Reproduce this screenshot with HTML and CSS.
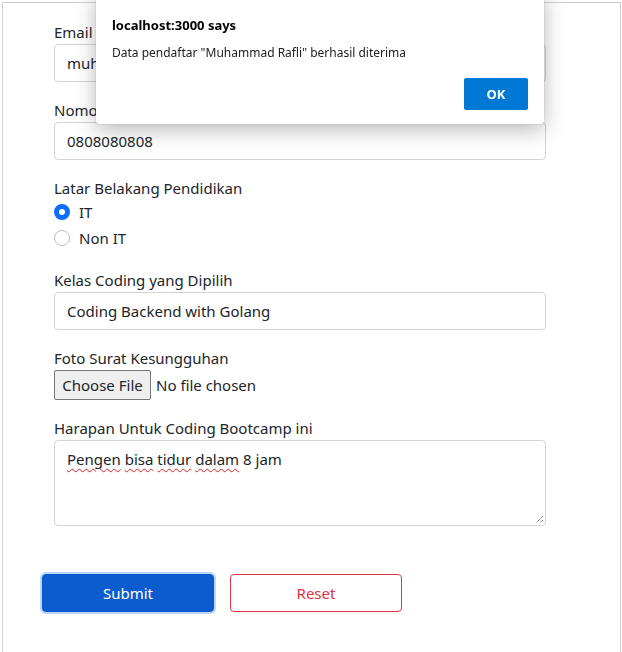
FILE: index.html
```html
<!DOCTYPE html>
<html lang="id">
<head>
<meta charset="utf-8">
<title>Form Pendaftaran</title>
<link rel="stylesheet" href="styles.css">
</head>
<body>
<div class="card">
  <form class="form">
    <div class="group">
      <label class="label" for="email">Email</label>
      <input class="control" id="email" type="text" value="muhammadrafli@gmail.com">
    </div>
    <div class="group">
      <label class="label" for="hp">Nomor Handphone</label>
      <input class="control" id="hp" type="text" value="0808080808">
    </div>
    <div class="group radios">
      <div class="label">Latar Belakang Pendidikan</div>
      <label class="check"><span class="radio checked"></span><span>IT</span></label>
      <label class="check"><span class="radio"></span><span>Non IT</span></label>
    </div>
    <div class="group">
      <label class="label" for="kelas">Kelas Coding yang Dipilih</label>
      <div class="control select" id="kelas">Coding Backend with Golang</div>
    </div>
    <div class="group">
      <div class="label">Foto Surat Kesungguhan</div>
      <div class="file"><span class="file-btn">Choose File</span><span class="file-name">No file chosen</span></div>
    </div>
    <div class="group">
      <div class="label">Harapan Untuk Coding Bootcamp ini</div>
      <div class="control area"><span class="typo">Pengen</span> <span class="typo">bisa</span> <span class="typo">tidur</span> <span class="typo">dalam</span> 8 jam
        <svg class="grip" width="10" height="10" viewBox="0 0 10 10"><path d="M9 2 L2 9 M9 6 L6 9" stroke="#555" stroke-width="1" stroke-dasharray="1 1"/></svg>
      </div>
    </div>
    <div class="actions">
      <button type="button" class="btn submit">Submit</button>
      <button type="button" class="btn reset">Reset</button>
    </div>
  </form>
</div>

<div class="dialog">
  <div class="dialog-title">localhost:3000 says</div>
  <div class="dialog-msg">Data pendaftar "Muhammad Rafli" berhasil diterima</div>
  <div class="dialog-actions"><button type="button" class="ok">OK</button></div>
</div>
</body>
</html>
```
FILE: styles.css
```css
* { box-sizing: border-box; }
html, body { margin: 0; padding: 0; background: #fff; }
body {
  font-family: "Noto Sans", "Open Sans", sans-serif;
  font-size: 15px;
  color: #212529;
  height: 652px;
  overflow: hidden;
}
.card {
  margin-left: 2px;
  margin-top: 2px;
  width: 619px;
  height: 650px;
  border: 1px solid #cfcfcf;
  border-bottom: none;
}
.form {
  padding: 17px 0 0 51px;
  width: 543px;
}
.group { margin-bottom: 16px; }
.radios { margin-bottom: 18px; }
.label { display: block; line-height: 24px; height: 24px; }
.control {
  display: block;
  width: 492px;
  height: 38px;
  border: 1px solid #ced4da;
  border-radius: 4px;
  padding: 6px 12px;
  font: inherit;
  line-height: 24px;
  color: #212529;
  background: #fff;
}
.area { height: 86px; position: relative; }
.grip { position: absolute; right: 1px; bottom: 1px; }
.typo { text-decoration: underline wavy #e02020; text-decoration-thickness: 1px; text-underline-offset: 3px; }
.check {
  display: flex;
  align-items: center;
  gap: 9px;
  height: 24px;
  margin-bottom: 2px;
}
.radio {
  width: 16px; height: 16px;
  border-radius: 50%;
  border: 1px solid #b9bec4;
  background: #fff;
}
.radio.checked {
  border: 5px solid #0d6efd;
  background: #fff;
}
.file { display: flex; align-items: center; gap: 5px; height: 30px; }
.file-btn {
  display: flex; align-items: center; justify-content: center;
  width: 97px; height: 30px;
  background: #efefef;
  border: 1px solid #767676;
  border-radius: 2px;
}
.actions {
  display: flex;
  gap: 16px;
  margin-left: -12px;
  padding-top: 32px;
}
.btn {
  width: 172px; height: 38px;
  border-radius: 4px;
  font: inherit;
  font-size: 15px;
}
.submit {
  background: #0b5ccf;
  color: #fff;
  border: 1px solid #0a58ca;
  box-shadow: 0 0 0 2px #bcd6fb;
}
.reset {
  background: #fff;
  color: #dc3545;
  border: 1px solid #dc3545;
}
.dialog {
  position: fixed;
  left: 96px; top: -10px;
  width: 448px; height: 134px;
  background: #fff;
  border-radius: 0 0 4px 4px;
  box-shadow: 0 6px 22px rgba(0,0,0,0.28), 0 0 2px rgba(0,0,0,0.2);
  padding: 26px 16px 0 16px;
  font-family: "Noto Sans", "Open Sans", sans-serif;
}
.dialog-title { font-weight: 700; font-size: 13px; line-height: 18px; color: #000; }
.dialog-msg { font-size: 12px; line-height: 18px; margin-top: 10px; color: #202020; }
.dialog-actions { display: flex; justify-content: flex-end; margin-top: 16px; }
.ok {
  width: 64px; height: 32px;
  background: #0078d4;
  color: #fff;
  border: none;
  border-radius: 2px;
  font: 700 13px "Noto Sans", sans-serif;
}
```
